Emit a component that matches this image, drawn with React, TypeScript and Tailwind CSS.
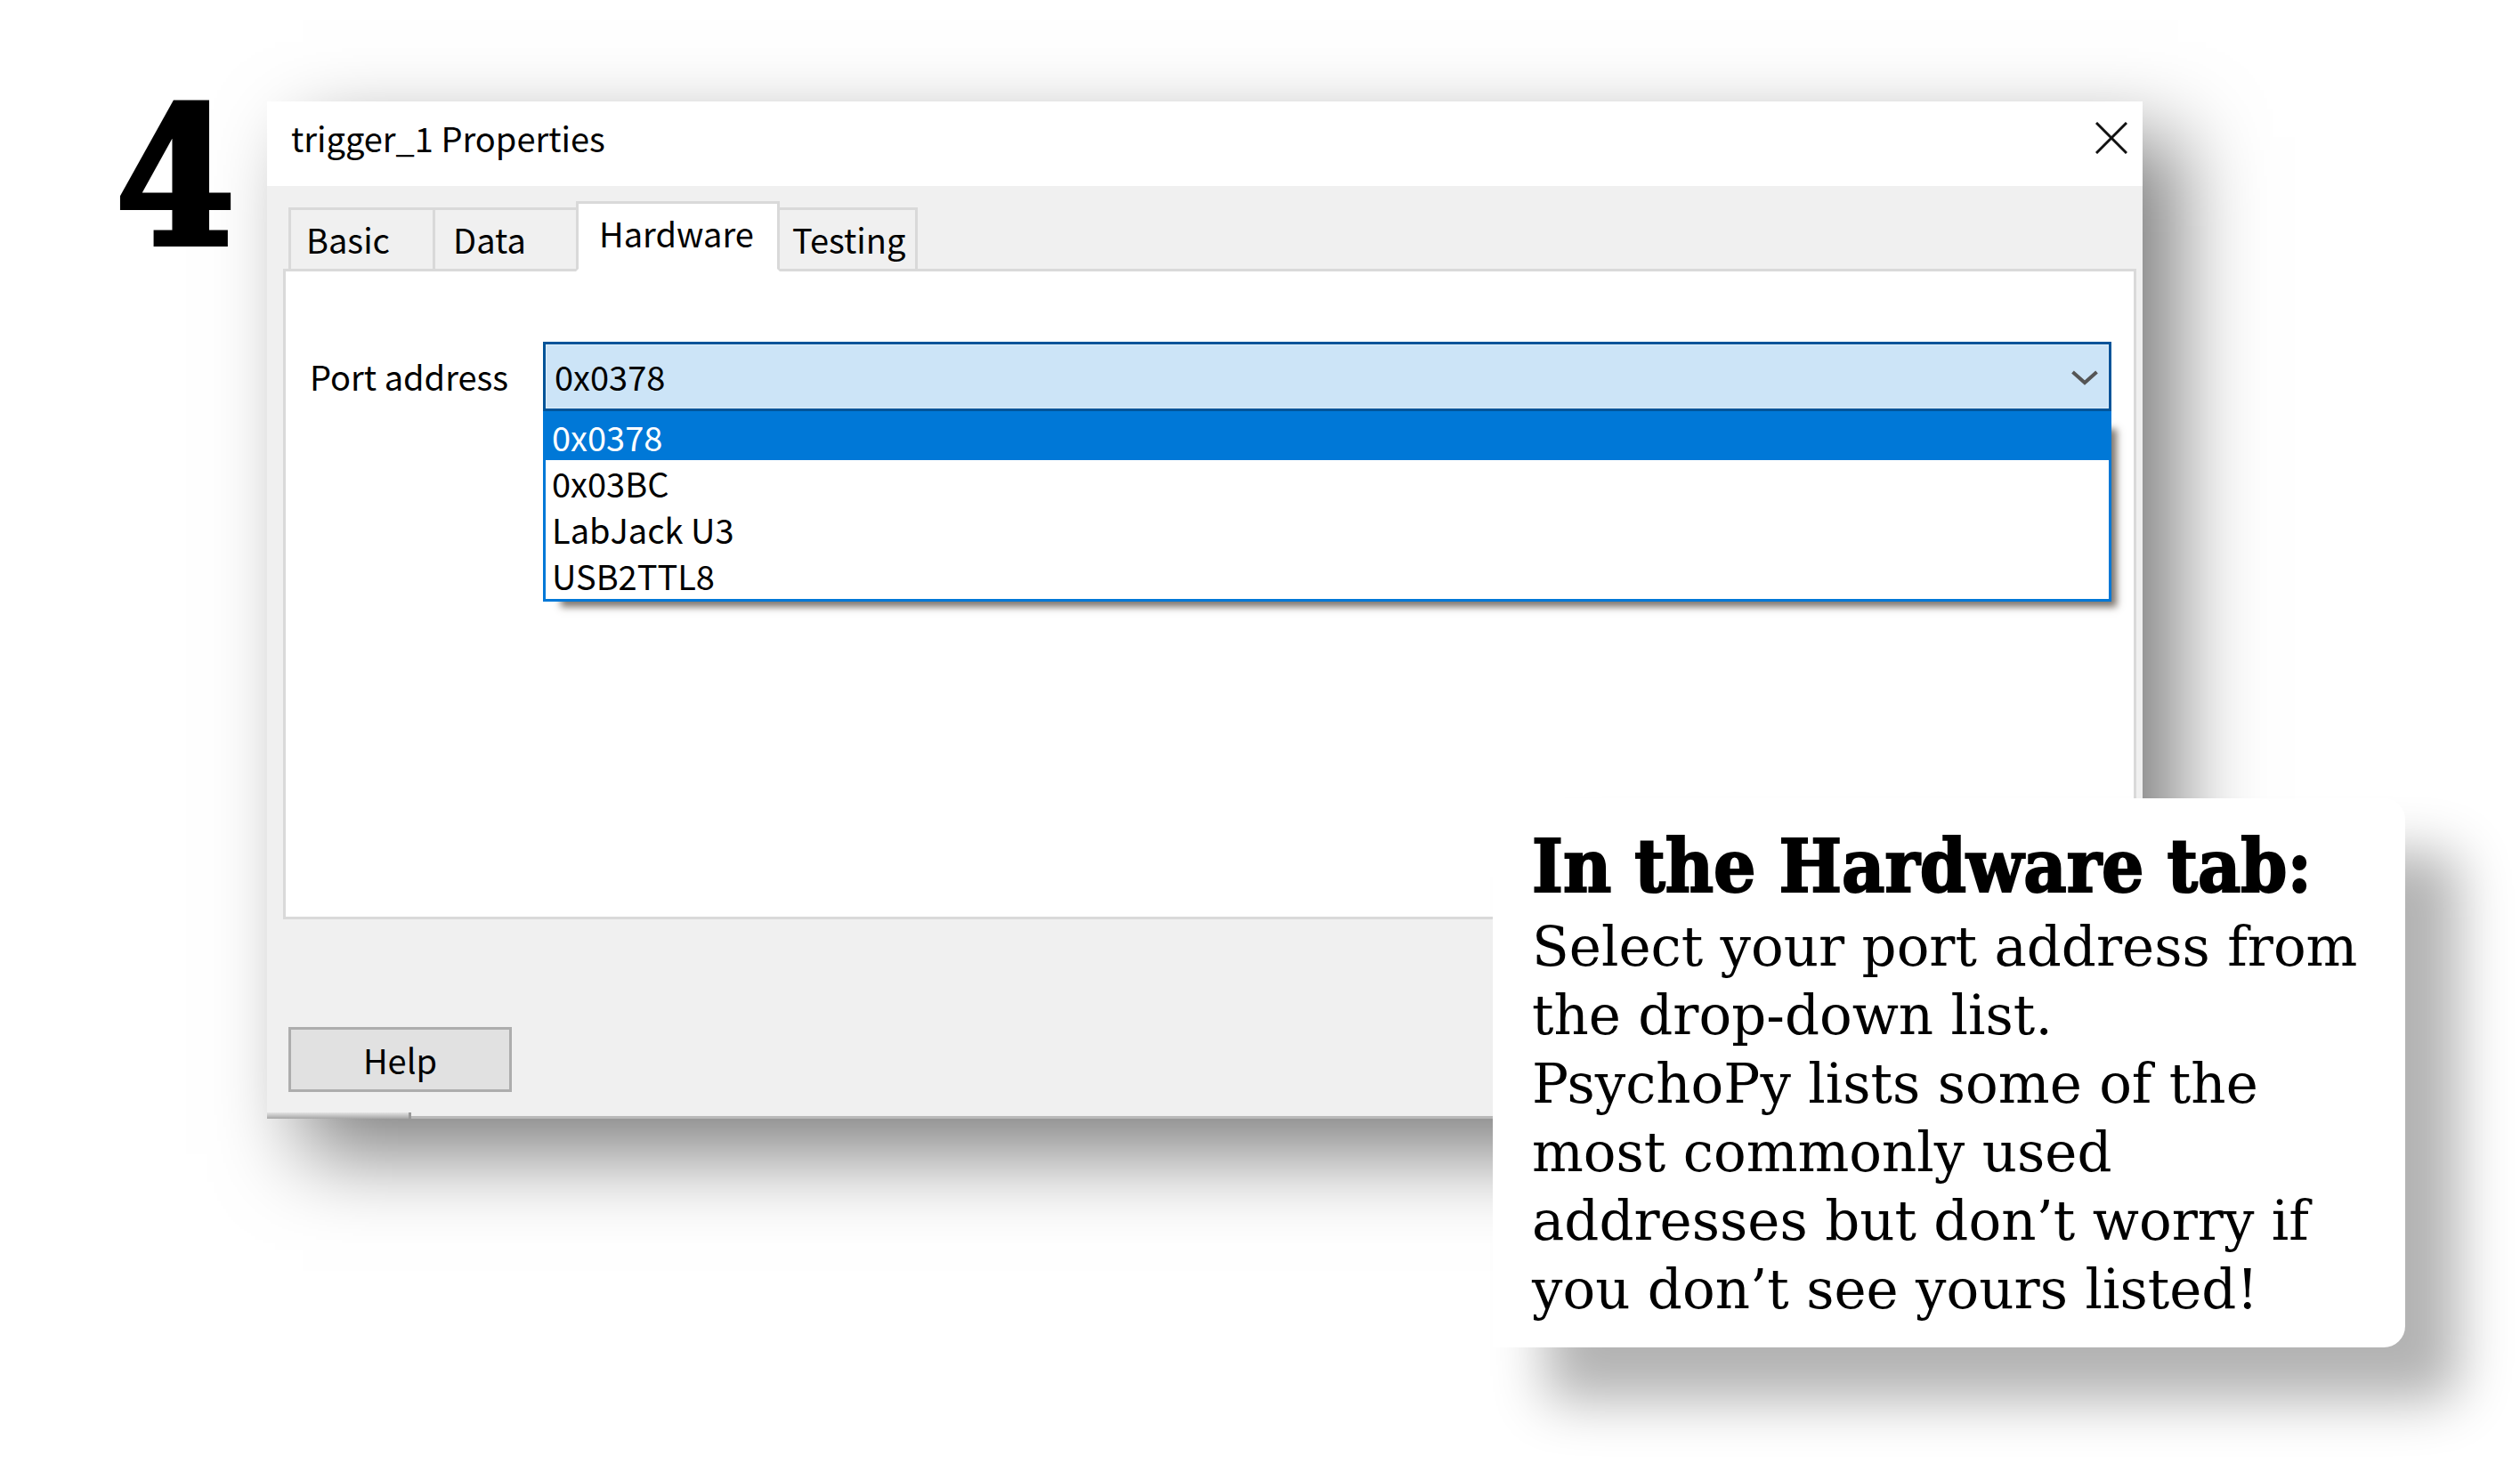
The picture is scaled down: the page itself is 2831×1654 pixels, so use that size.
import { useState } from "react";

const tabs = ["Basic", "Data", "Hardware", "Testing"];
const ports = ["0x0378", "0x03BC", "LabJack U3", "USB2TTL8"];

function TitleBar() {
  return (
    <header className="flex h-[95px] items-center justify-between bg-white pr-[15px] pb-[14px] pl-[27px]">
      <h1 className="leading-[52px]">trigger_1 Properties</h1>
      <button type="button" aria-label="Close" className="p-0.5">
        <svg width="36" height="36" viewBox="0 0 36 36" fill="none" stroke="#111" strokeWidth="3">
          <path d="M1 1L35 35M35 1L1 35" />
        </svg>
      </button>
    </header>
  );
}

function TabBar({ active, onChange }: { active: string; onChange: (t: string) => void }) {
  const widths: Record<string, string> = {
    Basic: "w-[162px] border-r-0 pl-[17px]",
    Data: "w-[161px] border-r-0 pl-[20px]",
    Hardware: "w-[229px] pl-[23px]",
    Testing: "w-[155px] border-l-0 pl-[14px]",
  };
  return (
    <div role="tablist" className="relative z-10 -mb-[3px] flex items-end pl-[24px]">
      {tabs.map((t) => (
        <button
          key={t}
          type="button"
          role="tab"
          aria-selected={t === active}
          onClick={() => onChange(t)}
          className={`border-[3px] border-[#d9d9d9] text-left leading-[52px] ${widths[t]} ${
            t === active ? "h-[79px] border-b-white bg-white pb-2" : "h-[72px] bg-[#f0f0f0]"
          }`}
        >
          {t}
        </button>
      ))}
    </div>
  );
}

function PortField() {
  const [port, setPort] = useState(ports[0]);
  return (
    <div className="flex items-center">
      <label htmlFor="port" className="w-[262px] shrink-0 leading-[52px]">
        Port address
      </label>
      <div className="relative flex-1">
        <select
          id="port"
          value={port}
          onChange={(e) => setPort(e.target.value)}
          className="block h-[78px] w-full appearance-none border-[3px] border-[#005499] bg-[#cce4f7] pl-[10px] leading-[52px] ring-1 ring-[#dfeefa] outline-none ring-inset"
        >
          {ports.map((p) => (
            <option key={p}>{p}</option>
          ))}
        </select>
        <svg
          className="pointer-events-none absolute top-[32px] right-[15px]"
          width="30"
          height="18"
          viewBox="0 0 30 18"
          fill="none"
          stroke="#555"
          strokeWidth="4"
        >
          <path d="M1.500 2L15 14L28.500 2" />
        </svg>
        <ul
          role="listbox"
          aria-label="Port address options"
          className="absolute top-full right-0 left-0 border-[3px] border-[#0078d7] bg-white shadow-[13px_13px_8px_-7px_rgba(70,60,50,0.7)]"
        >
          {ports.map((p) => (
            <li
              key={p}
              role="option"
              aria-selected={p === port}
              onClick={() => setPort(p)}
              className={`h-[52px] pl-[7px] leading-[51px] ${p === port ? "bg-[#0078d7] text-white" : ""}`}
            >
              {p}
            </li>
          ))}
        </ul>
      </div>
    </div>
  );
}

function Callout() {
  return (
    <aside className="absolute -right-[295px] -bottom-[257px] z-20 w-[1025px] rounded-r-3xl bg-white pt-[25px] pb-[27px] pl-[44px] font-['DejaVu_Serif',serif] shadow-[60px_60px_60px_rgba(0,0,0,0.3)]">
      <h2 className="font-['DejaVu_Serif_Condensed','DejaVu_Serif',serif] text-[83px] leading-[103px] font-bold whitespace-nowrap [-webkit-text-stroke:2px_black]">
        In the Hardware tab:
      </h2>
      <p className="text-[61px] leading-[77px] whitespace-nowrap">
        Select your port address from
        <br />
        the drop-down list.
        <br />
        PsychoPy lists some of the
        <br />
        most commonly used
        <br />
        addresses but don’t worry if
        <br />
        you don’t see yours listed!
      </p>
    </aside>
  );
}

export default function App() {
  const [tab, setTab] = useState("Hardware");
  return (
    <main className="flex min-h-screen items-start overflow-hidden bg-white pt-[114px] pr-[424px] pl-[130px] text-black">
      <div className="w-[170px] shrink-0 font-['DejaVu_Serif_Condensed','DejaVu_Serif',serif] text-[214px] leading-[170px] font-bold [-webkit-text-stroke:6px_black]">
        4
      </div>
      <div className="relative min-w-0 flex-1 font-['Noto_Sans_CJK_SC','Open_Sans',sans-serif] text-[38px]">
        <section
          aria-label="trigger_1 Properties"
          className="bg-[#f0f0f0] shadow-[40px_40px_88px_rgba(0,0,0,0.5)]"
        >
          <TitleBar />
          <div className="pt-[17px]">
            <TabBar active={tab} onChange={setTab} />
            <div
              role="tabpanel"
              className="mr-[7px] ml-[18px] min-h-[731px] border-[3px] border-[#d9d9d9] bg-white pt-[79px] pr-[25px] pl-[27px]"
            >
              <PortField />
            </div>
          </div>
          <footer className="pt-[121px]">
            <button
              type="button"
              className="ml-[24px] block h-[73px] w-[251px] border-[3px] border-[#adadad] bg-[#e1e1e1] leading-[52px]"
            >
              Help
            </button>
            <div className="mt-[23px] flex h-[7px] items-end">
              <div className="h-full w-[162px] border-r-[3px] border-[#999] bg-linear-to-b from-[#e4e4e4] to-[#a5a5a5]" />
              <div className="h-[3px] flex-1 bg-[#b9b9b9]" />
            </div>
          </footer>
        </section>
        <Callout />
      </div>
    </main>
  );
}
